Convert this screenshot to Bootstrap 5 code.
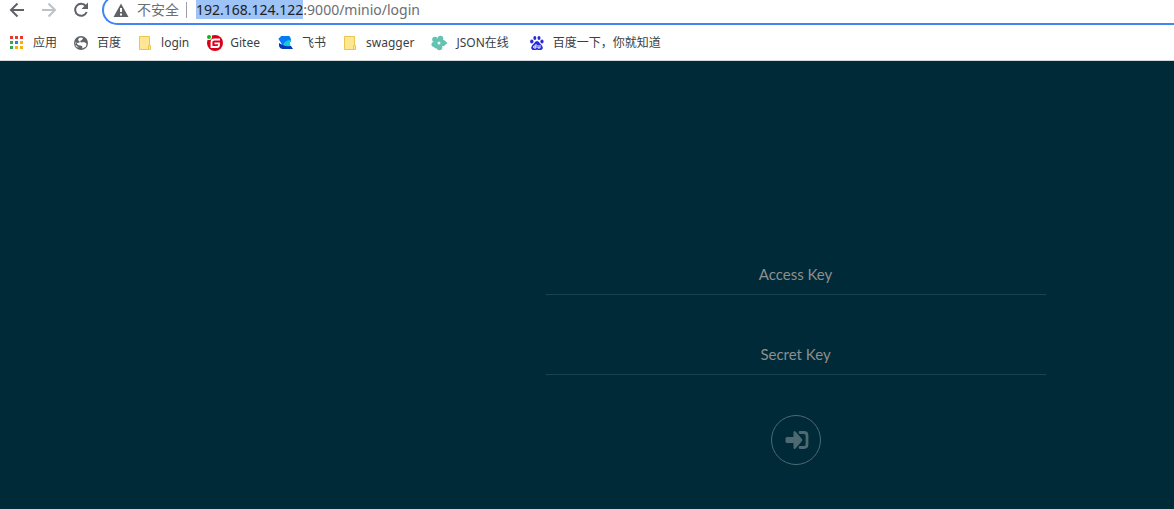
<!DOCTYPE html>
<html lang="zh-CN">
<head>
<meta charset="utf-8">
<meta name="viewport" content="width=device-width, initial-scale=1">
<title>MinIO Browser</title>
<link href="https://cdn.jsdelivr.net/npm/bootstrap@5.3.0/dist/css/bootstrap.min.css" rel="stylesheet">
<style>
  body { background: #002a37; font-family: "Noto Sans", "Noto Sans CJK SC", sans-serif; }
  .toolbar { height: 25px; padding-left: 8px; gap: 14px; }
  .tool-btn { width: 18px; height: 30px; color: #5f6368; }
  .tool-btn svg, .mark-link svg { display: block; }
  .tool-btn:disabled { opacity: 1; color: #bdc1c6; }
  .omnibox { height: 30px; border: 2px solid #4285f4; border-right: 0; border-radius: 15px 0 0 15px; padding-left: 9px; margin-left: -2px; font-size: 14px; line-height: 20px; color: #6b6e72; }
  .divider { width: 1px; height: 16px; background: #9aa0a6; margin: 0 9px 0 7px; }
  .host { background: #9dc3f7; color: #202124; }
  .bookmarks { height: 36px; padding-left: 8px; gap: 17px; border-bottom: 1px solid #d5d8da; font-size: 12px; line-height: 18px; }
  .mark-link { gap: 7px; color: #3c4043; }
  .login-area { padding: 194px 128px 0 16px; }
  .login-form { max-width: 500px; font-family: Lato, sans-serif; }
  .key-input, .key-input:focus { height: 40px; padding: 0 1px 1px 0; border: 0; border-bottom: 1px solid #1d414d; border-radius: 0; background: transparent; box-shadow: none; color: #fff; font-size: 15px; line-height: 20px; text-align: center; margin-bottom: 40px; }
  .key-input::placeholder { color: #8c8f8f; opacity: 1; }
  .enter-btn { width: 50px; height: 50px; border: 1px solid #4d6a73; color: #4d6a73; }
</style>
</head>
<body>
<header class="bg-white">
  <div class="toolbar d-flex align-items-end overflow-hidden">
    <button class="tool-btn btn p-0 border-0 d-flex align-items-center" type="button" aria-label="后退"><svg width="18" height="18" fill="none" stroke="currentColor" stroke-width="2"><path d="M16 9H3M9.500 2.500 3 9l6.500 6.500"/></svg></button>
    <button class="tool-btn btn p-0 border-0 d-flex align-items-center" type="button" aria-label="前进" disabled><svg width="18" height="18" fill="none" stroke="currentColor" stroke-width="2"><path d="M2 9h13M8.500 2.500 15 9l-6.500 6.500"/></svg></button>
    <button class="tool-btn btn p-0 border-0 d-flex align-items-center" type="button" aria-label="重新加载"><svg width="18" height="18" fill="none" stroke="currentColor" stroke-width="2"><path d="M13.800 5A6 6 0 1 0 14.700 11"/><path d="M16 1.500V8H9.500z" fill="currentColor" stroke="none"/></svg></button>
    <div class="omnibox d-flex align-items-center flex-grow-1">
      <svg class="me-2" width="16" height="16"><path d="M8 1.500 15.500 15H.5z" fill="#5f6368"/><path d="M7 6h2v4H7zM7 11.500h2v2H7z" fill="#fff"/></svg>
      <span>不安全</span><span class="divider"></span>
      <span><span class="host">192.168.124.122</span>:9000/minio/login</span>
    </div>
  </div>
  <nav class="bookmarks d-flex align-items-center text-nowrap overflow-hidden">
    <a class="mark-link d-flex align-items-center text-decoration-none" href="#"><svg width="18" height="16"><path fill="#ea3a30" d="M2 1h3v3H2zM7 1h3v3H7zM12 1h3v3h-3z"/><path fill="#34a853" d="M2 6h3v3H2zM2 11h3v3H2z"/><path fill="#1a88f0" d="M7 6h3v3H7z"/><path fill="#fbaf08" d="M12 6h3v3h-3zM7 11h3v3H7zM12 11h3v3h-3z"/></svg>应用</a>
    <a class="mark-link d-flex align-items-center text-decoration-none" href="#"><svg width="16" height="16"><circle cx="7" cy="8" r="7" fill="#5f6368"/><path fill="#fff" d="M7 2.500 9 3 8 5l-2 1 1 1.500 3-.5 2.500 1.500-.5 3-3.500 2L8 11 4 10 2 7 1.500 9.500 5 13 2 11.500 1 7.500l3 .5 2-1-2-2 1-2z"/></svg>百度</a>
    <a class="mark-link d-flex align-items-center text-decoration-none" href="#"><svg width="16" height="16"><path d="M1.500 1.500h10v9h1v4h-11z" fill="#ffe694" stroke="#e9c64c"/><path d="M10.500 14v-3.500h1" fill="none" stroke="#e9c64c"/></svg>login</a>
    <a class="mark-link d-flex align-items-center text-decoration-none" href="#"><svg width="17" height="16"><circle cx="9" cy="8" r="8" fill="#d9001b"/><path d="M14 4.500H8.500Q5.500 4.500 5.500 7v5H11q2 0 2-2V8.300H8.500" fill="none" stroke="#fff" stroke-width="1.800"/><circle cx="3" cy="2" r="3" fill="#fff"/><circle cx="3" cy="2" r="2" fill="#10b51a"/></svg>Gitee</a>
    <a class="mark-link d-flex align-items-center text-decoration-none" href="#"><svg width="18" height="16"><path fill="#0879f8" d="M4 1h8q2 1 2 5l-4 5H6L1.500 4q0-1.500 1.500-1.500z"/><path fill="#0636ba" d="M2 8q4 3 12 3l2 3H6q-3 0-4-3z"/><path fill="#11cdd0" d="M6 10q2-5 8-5-1.500 2-.5 6-4 1-7.500-1z"/></svg>飞书</a>
    <a class="mark-link d-flex align-items-center text-decoration-none" href="#"><svg width="16" height="16"><path d="M1.500 1.500h10v9h1v4h-11z" fill="#ffe694" stroke="#e9c64c"/><path d="M10.500 14v-3.500h1" fill="none" stroke="#e9c64c"/></svg>swagger</a>
    <a class="mark-link d-flex align-items-center text-decoration-none" href="#"><svg width="18" height="16"><g fill="#62c3b1"><circle cx="4" cy="4.500" r="2.800"/><circle cx="9.500" cy="3.500" r="2.800"/><circle cx="2.800" cy="9.500" r="2.400"/><circle cx="8.500" cy="12.500" r="2.800"/><path d="M10 5h3l3.500 3-3.500 3h-3z"/><circle cx="5" cy="11.500" r="2"/><circle cx="7.500" cy="8" r="4"/></g><circle cx="8" cy="8" r="1.500" fill="#e6f8f4"/></svg>JSON在线</a>
    <a class="mark-link d-flex align-items-center text-decoration-none ms-1" href="#"><svg width="16" height="16"><g fill="#272bdc"><ellipse cx="1.800" cy="6.500" rx="1.700" ry="2.100"/><ellipse cx="4.800" cy="3" rx="1.500" ry="2.100"/><ellipse cx="9" cy="3" rx="1.500" ry="2.100"/><ellipse cx="12" cy="6.500" rx="1.600" ry="2.100"/><path d="M7 6q2 0 3 2.500l2 2q1.500 2 0 4-1.500 1-5 .2-4 .9-5-.2-1.500-2 0-4l2-2Q5 6 7 6z"/></g><path d="M6 9v4H4q-1-1 0-2h2M8 10v3h2v-3" fill="none" stroke="#fff"/></svg>百度一下，你就知道</a>
  </nav>
</header>
<main class="login-area">
  <form class="login-form ms-auto">
    <input class="key-input form-control" type="text" placeholder="Access Key" aria-label="Access Key">
    <input class="key-input form-control" type="password" placeholder="Secret Key" aria-label="Secret Key">
    <button class="enter-btn btn rounded-circle p-0 d-flex align-items-center justify-content-center mx-auto" type="submit" aria-label="Login"><svg width="26" height="20"><path fill="currentColor" d="M4 7h6.500V2.500q0-2.500 2-1l6.500 7.500q.7 1 0 2l-6.500 7.500q-2 1.500-2-1V13H4q-1.500 0-1.500-1.500v-3Q2.500 7 4 7z"/><path d="M17 2.500h4q3 0 3 3v9q0 3-3 3h-4" fill="none" stroke="currentColor" stroke-width="2.800" stroke-linecap="round"/></svg></button>
  </form>
</main>
<script src="https://cdn.jsdelivr.net/npm/bootstrap@5.3.0/dist/js/bootstrap.bundle.min.js"></script>
</body>
</html>
